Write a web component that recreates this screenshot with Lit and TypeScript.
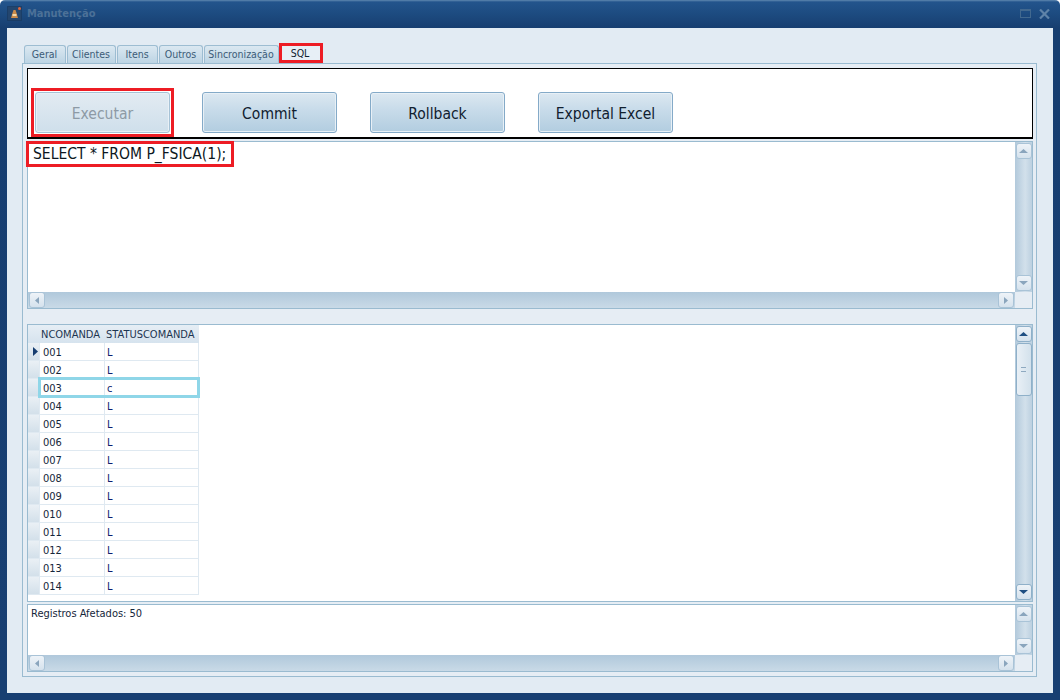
import { LitElement, html, css, svg } from "lit";
import { customElement } from "lit/decorators.js";

const arrow = (dir: string, dark = false) => {
  const pts: Record<string, string> = {
    up: "0,4 4.5,0 9,4",
    down: "0,0 4.5,4 9,0",
    left: "4,0 0,3.5 4,7",
    right: "0,0 4,3.5 0,7",
  };
  const vertical = dir === "up" || dir === "down";
  return html`<svg width=${vertical ? 9 : 4} height=${vertical ? 4 : 7} viewBox=${vertical ? "0 0 9 4" : "0 0 4 7"}>
    ${svg`<polygon points=${pts[dir]} fill=${dark ? "#1f4f82" : "#8aa5bd"}></polygon>`}
  </svg>`;
};

const rows: [string, string][] = [
  ["001", "L"], ["002", "L"], ["003", "c"], ["004", "L"], ["005", "L"], ["006", "L"], ["007", "L"],
  ["008", "L"], ["009", "L"], ["010", "L"], ["011", "L"], ["012", "L"], ["013", "L"], ["014", "L"],
];

@customElement("app-root")
export class AppRoot extends LitElement {
  static styles = css`
    :host {
      display: block;
      width: 1060px;
      height: 700px;
      overflow: hidden;
      font-family: "DejaVu Sans", "Noto Sans", sans-serif;
      font-stretch: condensed;
      font-size: 11px;
      color: #15263a;
    }
    .window {
      width: 1060px;
      height: 700px;
      box-sizing: border-box;
      display: flex;
      flex-direction: column;
      padding: 0 7px 7px;
      border-radius: 5px 5px 0 0;
      background: linear-gradient(180deg, #5f88b0 0, #23548c 2px, #1d4b80 14px, #173e70 28px, #183f72 100%);
    }
    .title {
      height: 28px;
      flex: none;
      display: flex;
      align-items: center;
      gap: 5px;
      box-sizing: border-box;
      padding: 2px 3px 3px 0;
    }
    .app-ico { width: 15px; height: 15px; flex: none; }
    .title-text {
      flex: 1;
      font-weight: 700;
      font-size: 11px;
      color: #4c7198;
    }
    .win-btn { display: block; flex: none; margin-left: 3px; }
    .client {
      flex: 1;
      min-height: 0;
      background: #e2ebf3;
      display: flex;
      flex-direction: column;
      padding: 15px 16px 16px 15px;
    }
    .tabs {
      display: flex;
      align-items: flex-end;
      height: 20px;
      padding-left: 2px;
      gap: 1px;
      flex: none;
    }
    .tab {
      height: 18px;
      box-sizing: border-box;
      border: 1px solid #9dbdd2;
      border-bottom: 0;
      border-radius: 3px 3px 0 0;
      background: linear-gradient(180deg, #dbe8f1, #bcd4e4);
      color: #3c5c78;
      font-size: 10.5px;
      line-height: 16px;
      text-align: center;
      flex: none;
      padding-right: 1px;
    }
    .tab.sql {
      height: 20px;
      margin-left: -1px;
      border: 3px solid #ed1c24;
      border-radius: 0;
      background: #e7eff6;
      color: #10202f;
      line-height: 14px;
      padding-right: 2px;
    }
    .panel {
      flex: 1;
      min-height: 0;
      border: 1px solid #9abbd0;
      background: #e6edf4;
      padding: 4px 3px 4px 4px;
      display: flex;
      flex-direction: column;
    }
    .toolbar {
      height: 71px;
      flex: none;
      box-sizing: border-box;
      border: 1px solid #000;
      border-bottom-width: 2px;
      background: #fff;
      display: flex;
      align-items: flex-end;
      gap: 33px;
      padding: 0 0 4px 3px;
    }
    .btn {
      width: 135px;
      height: 41px;
      box-sizing: border-box;
      border: 1px solid #84aac8;
      border-radius: 3px;
      background: linear-gradient(180deg, #dce8f1 0, #c9dcea 40%, #b2cde0 100%);
      box-shadow: inset 0 0 0 1px #e8f0f6;
      font-size: 15.5px;
      color: #10202f;
      display: flex;
      align-items: center;
      justify-content: center;
      padding-top: 2px;
    }
    .btn.off { color: #8d9aa5; background: linear-gradient(180deg, #e2ebf2, #cfdfeb); border-color: #a6c2d6; }
    .mark {
      border: 3px solid #ed1c24;
      padding: 1px;
      margin: 0 -5px -4px 0;
      flex: none;
    }
    .box {
      box-sizing: border-box;
      border: 1px solid #9abbd0;
      background: #fff;
      display: grid;
      min-height: 0;
      flex: none;
      grid-template-columns: 1fr 17px;
    }
    .editor { height: 168px; margin-top: 2px; grid-template-rows: 1fr 16px; }
    .grid-box { height: 278px; margin-top: 15px; }
    .msg { height: 68px; margin-top: 2px; grid-template-rows: 1fr 16px; }
    .content { min-width: 0; min-height: 0; position: relative; }
    .sql-text {
      display: inline-block;
      border: 3px solid #ed1c24;
      margin: -1px 0 0 -2px;
      padding: 0 5px 0 4px;
      height: 26px;
      box-sizing: border-box;
      font-size: 15.5px;
      line-height: 20px;
      color: #0c1722;
      background: #fff;
    }
    .msg-text { padding: 2px 0 0 3px; font-size: 11px; line-height: 14px; color: #15263a; }
    .vbar {
      background: linear-gradient(90deg, #b2c9db, #d2e0eb 60%, #bcd0e0);
      display: flex;
      flex-direction: column;
      justify-content: space-between;
      align-items: center;
      padding: 1px 0;
      box-sizing: border-box;
    }
    .hbar {
      background: linear-gradient(180deg, #b0c8db, #c9dae7);
      display: flex;
      justify-content: space-between;
      align-items: center;
      padding: 0 1px;
      box-sizing: border-box;
    }
    .corner { background: #e6edf4; }
    .sbtn {
      width: 16px;
      height: 16px;
      box-sizing: border-box;
      border: 1px solid #a9c3d7;
      border-radius: 3px;
      background: linear-gradient(180deg, #eef3f8, #d5e2ed);
      display: flex;
      align-items: center;
      justify-content: center;
      flex: none;
    }
    .sbtn.hot { border-color: #8fb0c9; }
    .vstack { display: flex; flex-direction: column; gap: 1px; align-items: center; }
    .thumb {
      width: 16px;
      height: 53px;
      box-sizing: border-box;
      border: 1px solid #8fb0c9;
      border-radius: 3px;
      background: linear-gradient(90deg, #e9f0f6, #d3e1ec);
      display: flex;
      align-items: center;
      justify-content: center;
    }
    .grip { width: 5px; height: 3px; border-top: 1px solid #8ea9c0; border-bottom: 1px solid #8ea9c0; }
    table {
      border-collapse: separate;
      border-spacing: 0;
      table-layout: fixed;
      width: 171px;
      font-size: 11px;
    }
    th, td { height: 18px; padding: 0; box-sizing: border-box; font-weight: 400; text-align: left; white-space: nowrap; }
    th {
      background: linear-gradient(180deg, #e6eef5, #d6e3ee);
      padding-left: 1px;
      color: #1d3550;
    }
    td {
      border-right: 1px solid #dfe9f1;
      border-bottom: 1px solid #dfe9f1;
      padding: 2px 0 0 3px;
      line-height: 15px;
    }
    td.status { color: #0e1e70; padding-left: 2px; }
    td.head {
      background: linear-gradient(180deg, #eaf0f5, #d3e0ea);
      padding: 0;
    }
    td.head svg { display: block; margin-left: 5px; }
    .sel-box {
      position: absolute;
      left: 10px;
      width: 162px;
      height: 21px;
      box-sizing: border-box;
      border: 3px solid #8fd6e8;
    }
  `;

  private vbar(dark: boolean, thumb: boolean) {
    return html`<div class="vbar">
      <div class="vstack">
        <div class="sbtn ${dark ? "hot" : ""}">${arrow("up", dark)}</div>
        ${thumb ? html`<div class="thumb"><div class="grip"></div></div>` : ""}
      </div>
      <div class="sbtn ${dark ? "hot" : ""}">${arrow("down", dark)}</div>
    </div>`;
  }

  private hbar() {
    return html`<div class="hbar">
      <div class="sbtn">${arrow("left")}</div>
      <div class="sbtn">${arrow("right")}</div>
    </div>`;
  }

  render() {
    const tabs: [string, number][] = [["Geral", 42], ["Clientes", 49], ["Itens", 41], ["Outros", 44], ["Sincronização", 75]];
    const selected = 2;
    return html`<div class="window">
      <div class="title">
        <svg class="app-ico" viewBox="0 0 15 15">
          <rect x="0.5" y="0.5" width="14" height="14" fill="#24466e" stroke="#173558" stroke-dasharray="1 1"></rect>
          <path d="M4 12 L5.5 7 L6.5 4 L8.5 4 L9.5 7 L11 12 Z" fill="#c98a4a"></path>
          <rect x="5.5" y="8" width="4" height="2" fill="#f0d6a8"></rect>
          <circle cx="12.5" cy="2.5" r="1.5" fill="#e2663a"></circle>
        </svg>
        <div class="title-text">Manutenção</div>
        <svg class="win-btn" width="11" height="9" viewBox="0 0 11 9">
          <rect x="0.5" y="0.5" width="10" height="8" fill="none" stroke="#42698f"></rect>
          <rect x="0.5" y="0.5" width="10" height="1.5" fill="#42698f"></rect>
        </svg>
        <svg class="win-btn" width="11" height="10" viewBox="0 0 11 10">
          <path d="M1 0.5 L10 9.5 M10 0.5 L1 9.5" stroke="#5f83a8" stroke-width="2.2" fill="none"></path>
        </svg>
      </div>
      <div class="client">
        <div class="tabs">
          ${tabs.map(([t, w]) => html`<div class="tab" style="width:${w}px">${t}</div>`)}
          <div class="tab sql" style="width:44px">SQL</div>
        </div>
        <div class="panel">
          <div class="toolbar">
            <div class="mark"><div class="btn off">Executar</div></div>
            <div class="btn">Commit</div>
            <div class="btn">Rollback</div>
            <div class="btn">Exportal Excel</div>
          </div>
          <div class="box editor">
            <div class="content"><span class="sql-text">SELECT * FROM P_FSICA(1);</span></div>
            ${this.vbar(false, false)}
            ${this.hbar()}
            <div class="corner"></div>
          </div>
          <div class="box grid-box">
            <div class="content">
              <table>
                <colgroup><col style="width:12px" /><col style="width:65px" /><col style="width:94px" /></colgroup>
                <thead><tr><th></th><th>NCOMANDA</th><th>STATUSCOMANDA</th></tr></thead>
                <tbody>
                  ${rows.map(([a, b], i) => html`<tr>
                    <td class="head">${i === 0
                      ? html`<svg width="5" height="9" viewBox="0 0 5 9"><polygon points="0,0 5,4.5 0,9" fill="#163d70"></polygon></svg>`
                      : ""}</td>
                    <td>${a}</td>
                    <td class="status">${b}</td>
                  </tr>`)}
                </tbody>
              </table>
              <div class="sel-box" style="top:${16 + 18 * selected}px"></div>
            </div>
            ${this.vbar(true, true)}
          </div>
          <div class="box msg">
            <div class="content"><div class="msg-text">Registros Afetados: 50</div></div>
            ${this.vbar(false, false)}
            ${this.hbar()}
            <div class="corner"></div>
          </div>
        </div>
      </div>
    </div>`;
  }
}
